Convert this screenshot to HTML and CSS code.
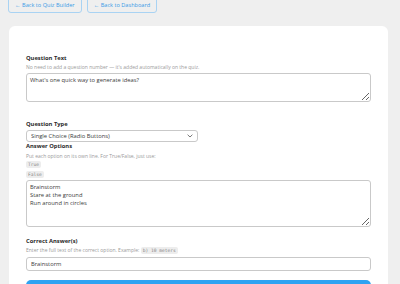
FILE: index.html
```html
<!DOCTYPE html>
<html lang="en">
<head>
  <meta charset="UTF-8" />
  <meta name="viewport" content="width=device-width, initial-scale=1.0" />
  <title>Edit Question</title>
  <link rel="stylesheet" href="styles.css">
</head>
<body>
  <div class="top-links">
    <a href="#" class="btn-link">&larr; Back to Quiz Builder</a>
    <a href="#" class="btn-link">&larr; Back to Dashboard</a>
  </div>

  <div class="card">
    <form class="question-form">
      <div class="field field-gap">
        <label for="qText">Question Text</label>
        <small class="hint">No need to add a question number — it's added automatically on the quiz.</small>
        <textarea id="qText" class="ta-short">What's one quick way to generate ideas?</textarea>
      </div>

      <div class="field">
        <label for="qType">Question Type</label>
        <div class="select-wrap">
          <select id="qType">
            <option>Single Choice (Radio Buttons)</option>
          </select>
          <svg class="chevron" width="6" height="4" viewBox="0 0 6 4"><path d="M0.6 0.7 L3 3 L5.4 0.7" fill="none" stroke="#555" stroke-width="0.8"/></svg>
        </div>
      </div>

      <div class="field field-gap-sm">
        <label for="qOptions">Answer Options</label>
        <small class="hint hint-code">Put each option on its own line. For True/False, just use:<br><code>True</code><br><code>False</code></small>
        <textarea id="qOptions" class="ta-tall">Brainstorm
Stare at the ground
Run around in circles</textarea>
      </div>

      <div class="field">
        <label for="qCorrect">Correct Answer(s)</label>
        <small class="hint">Enter the full text of the correct option. Example: <code>b) 10 meters</code></small>
        <input id="qCorrect" type="text" value="Brainstorm" />
      </div>

      <button type="submit" class="btn-save">Save Question</button>
    </form>
  </div>
</body>
</html>
```

FILE: styles.css
```css
:root {
  --bg-color: #efefef;
  --card-bg: #fff;
  --text-color: #222;
  --muted: #9a9a9a;
  --border: #c9c9c9;
  --link: #3a9be6;
  --primary: #2ea3f2;
}

body {
  font-family: "Open Sans", "Noto Sans", Arial, sans-serif;
  margin: 0;
  padding: 0 12px 0 9px;
  background-color: var(--bg-color);
  color: var(--text-color);
}

.top-links {
  display: flex;
  gap: 5px;
  margin-top: -5px;
  margin-left: -1px;
}

.btn-link {
  display: inline-block;
  padding: 5px 6px 3px;
  border: 1px solid #a9d3f3;
  border-radius: 3px;
  color: var(--link);
  font-size: 5.6px;
  text-decoration: none;
}

.card {
  margin-top: 13px;
  background-color: var(--card-bg);
  border-radius: 6px;
  padding: 28px 17px 0;
}

.field {
  display: flex;
  flex-direction: column;
}

.field-gap {
  margin-bottom: 18px;
}

.field-gap-sm {
  margin-bottom: 10px;
}

label {
  font-size: 5.8px;
  font-weight: 700;
  line-height: 9px;
  color: #2a2a2a;
}

.hint {
  font-size: 5px;
  color: var(--muted);
  line-height: 8px;
  margin-bottom: 2px;
}

.hint-code {
  line-height: 8.5px;
  margin-top: 0.5px;
  margin-bottom: 1px;
}

code {
  font-family: "DejaVu Sans Mono", monospace;
  font-size: 4.6px;
  background-color: #ededed;
  color: #888;
  padding: 1px 2px;
  border-radius: 2px;
}

textarea,
select,
input {
  display: block;
  font-family: inherit;
  font-size: 5.8px;
  color: #3a3a3a;
  border: 1px solid var(--border);
  border-radius: 3px;
  background-color: #fff;
  box-sizing: border-box;
  width: 100%;
  margin: 0;
}

textarea {
  padding: 2px 3px;
  line-height: 8px;
  resize: vertical;
}

.ta-short {
  height: 29px;
}

.ta-tall {
  height: 47px;
}

.select-wrap {
  position: relative;
  width: 172px;
  margin-top: 1px;
  font-size: 0;
}

select {
  appearance: none;
  -webkit-appearance: none;
  height: 12px;
  padding: 0 4px;
}

.chevron {
  position: absolute;
  right: 5px;
  top: 4px;
  pointer-events: none;
}

input {
  height: 14px;
  padding: 0 4px;
}

.btn-save {
  display: block;
  width: 100%;
  margin-top: 9px;
  height: 32px;
  border: none;
  border-radius: 5px;
  background-color: var(--primary);
  color: white;
  font-size: 7px;
  cursor: pointer;
}
```
